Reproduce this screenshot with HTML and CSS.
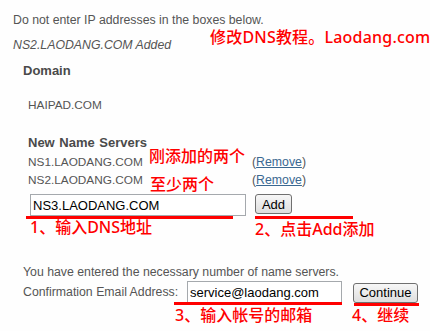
FILE: index.html
```html
<!DOCTYPE html>
<html>
<head>
<meta charset="utf-8">
<link rel="stylesheet" href="styles.css">
</head>
<body>
<div class="page">
  <p class="note">Do not enter IP addresses in the boxes below.</p>
  <p class="added">NS2.LAODANG.COM Added</p>
  <h3 class="label">Domain</h3>
  <p class="domain">HAIPAD.COM</p>
  <div class="ns">
    <h3 class="ns-title">New Name Servers</h3>
    <div class="ns-row first"><span class="ns-name">NS1.LAODANG.COM</span><span class="remove">(<a href="#">Remove</a>)</span></div>
    <div class="ns-row"><span class="ns-name">NS2.LAODANG.COM</span><span class="remove">(<a href="#">Remove</a>)</span></div>
    <div class="ns-add">
      <input class="text-input ns-input" type="text" value="NS3.LAODANG.COM">
      <button class="btn add-btn" type="button">Add</button>
    </div>
  </div>
  <p class="done">You have entered the necessary number of name servers.</p>
  <div class="confirm">
    <label class="confirm-label">Confirmation Email Address:</label>
    <input class="text-input email-input" type="text" value="service@laodang.com">
    <button class="btn continue-btn" type="button">Continue</button>
  </div>

  <div class="annot title">修改DNS教程。Laodang.com</div>
  <div class="annot a-added">刚添加的两个</div>
  <div class="annot a-min">至少两个</div>
  <div class="annot a-step1">1、输入DNS地址</div>
  <div class="annot a-step2">2、点击Add添加</div>
  <div class="annot a-step3">3、输入帐号的邮箱</div>
  <div class="annot a-step4">4、继续</div>
  <div class="uline u1"></div>
  <div class="uline u2"></div>
  <div class="uline u3"></div>
  <div class="uline u4"></div>
</div>
</body>
</html>
```
FILE: styles.css
```css
html, body {
  margin: 0;
  padding: 0;
  background: #fefefe;
}
.page {
  position: relative;
  width: 430px;
  height: 331px;
  box-sizing: border-box;
  padding: 13px 0 0 13px;
  font-family: "Liberation Sans", Arial, sans-serif;
  font-size: 12.3px;
  color: #555;
  overflow: hidden;
}
p, h3 {
  margin: 0;
}
.note {
  line-height: 14px;
}
.added {
  margin-top: 11px;
  line-height: 14px;
  font-style: italic;
}
.label {
  margin: 11px 0 0 10px;
  font-size: 13px;
  line-height: 15px;
  font-weight: bold;
  color: #4a4a4a;
}
.domain {
  margin: 20px 0 0 15px;
  line-height: 14px;
  font-size: 11.8px;
}
.ns {
  margin-left: 15px;
}
.ns-title {
  margin-top: 22px;
  font-size: 13px;
  line-height: 18px;
  font-weight: bold;
  color: #4a4a4a;
  word-spacing: 1px;
}
.ns-row {
  display: flex;
  line-height: 18px;
}
.ns-row.first {
  margin-top: 1px;
}
.ns-name {
  width: 224px;
  font-size: 11.8px;
}
.remove a {
  color: #3a6891;
  text-decoration: underline;
}
.ns-add {
  display: flex;
  align-items: flex-start;
  gap: 9px;
  margin: 5px 0 0 2px;
}
.text-input {
  box-sizing: border-box;
  height: 22px;
  margin: 0;
  padding: 0 2px;
  border: 1px solid #a5a9ad;
  background: #fff;
  font-family: "Liberation Sans", Arial, sans-serif;
  font-size: 13px;
  color: #000;
  outline: none;
}
.ns-input {
  width: 216px;
}
.btn {
  box-sizing: border-box;
  height: 20px;
  margin: 0;
  padding: 0;
  border: 1px solid #707070;
  border-radius: 3px;
  background: linear-gradient(#f7f7f7, #dedede);
  font-family: "Liberation Sans", Arial, sans-serif;
  font-size: 13px;
  color: #000;
}
.add-btn {
  width: 37px;
}
.done {
  margin: 49px 0 0 10px;
  line-height: 14px;
}
.confirm {
  display: flex;
  align-items: center;
  margin: 2px 0 0 10px;
  line-height: 14px;
}
.confirm-label {
  width: 164px;
}
.email-input {
  width: 155px;
}
.continue-btn {
  width: 65px;
  margin-left: 11px;
  margin-top: 1px;
}

/* red annotation overlay */
.annot {
  position: absolute;
  font-family: "Noto Sans", "Noto Sans CJK SC", sans-serif;
  font-size: 16px;
  font-weight: 500;
  line-height: 16px;
  color: #f00;
  white-space: nowrap;
}
.title { left: 210px; top: 29px; letter-spacing: 0.2px; }
.a-added { left: 149px; top: 148px; }
.a-min { left: 150px; top: 176px; }
.a-step1 { left: 30px; top: 219px; }
.a-step2 { left: 255px; top: 221px; }
.a-step3 { left: 175px; top: 307px; }
.a-step4 { left: 352px; top: 307px; }
.uline {
  position: absolute;
  height: 3px;
  background: #f00;
}
.u1 { left: 26px; top: 216px; width: 207px; }
.u2 { left: 255px; top: 216px; width: 98px; }
.u3 { left: 174px; top: 302px; width: 168px; }
.u4 { left: 354px; top: 303px; width: 65px; }
```
